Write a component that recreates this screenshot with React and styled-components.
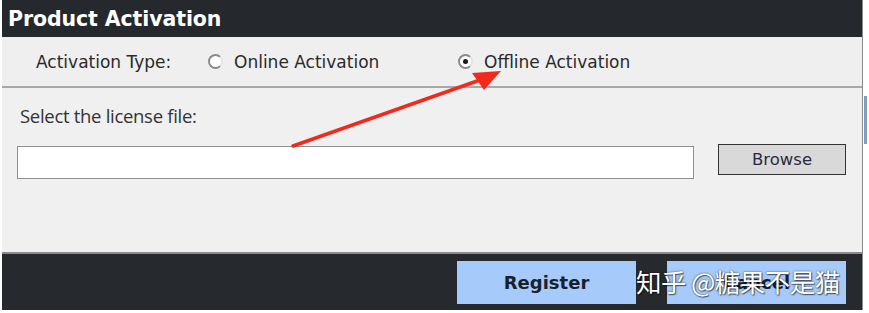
import React from 'react';
import styled, { createGlobalStyle } from 'styled-components';

const GlobalStyle = createGlobalStyle`
  html, body {
    margin: 0;
    padding: 0;
    background: #ffffff;
  }
  body {
    font-family: 'DejaVu Sans', Verdana, sans-serif;
  }
`;

// 창 전체를 감싸는 div 입니다.
const Window = styled.div`
  position: relative;
  width: 860px;
  margin-left: 2px;
  border-right: 1px solid #8c8c8c;
  background: #f0f0f0;
`;

const TitleBar = styled.div`
  height: 37px;
  display: flex;
  align-items: center;
  padding-left: 6px;
  background: #25282d;
  color: #ffffff;
  font-family: 'DejaVu Sans', sans-serif;
  font-weight: 700;
  font-size: 20.5px;
  letter-spacing: -0.1px;
`;

const TypeRow = styled.div`
  height: 49px;
  display: flex;
  align-items: center;
  padding-left: 34px;
  background: #efefef;
  border-bottom: 2px solid #a8a8a8;
  color: #2a2a2a;
  font-size: 17px;
`;

const TypeLabel = styled.span`
  width: 172px;
`;

const RadioOption = styled.label`
  display: flex;
  align-items: center;
  gap: 11px;
  width: ${({ $width }) => $width}px;
`;

const RadioDot = styled.span`
  width: 11px;
  height: 11px;
  border-radius: 50%;
  border: 2px solid #8a8a8a;
  border-right-color: #e4e4e4;
  background: #ffffff;
  display: inline-flex;
  align-items: center;
  justify-content: center;
  &::after {
    content: '';
    width: 5px;
    height: 5px;
    border-radius: 50%;
    background: ${({ $checked }) => ($checked ? '#1a1a1a' : 'transparent')};
  }
`;

const Content = styled.div`
  height: 164px;
  padding: 15px 15px 0 15px;
  box-sizing: border-box;
  background: #f0f0f0;
`;

const FileLabel = styled.div`
  font-family: 'Open Sans', sans-serif;
  font-size: 18.5px;
  letter-spacing: -0.3px;
  color: #333333;
  padding-left: 3px;
  line-height: 26px;
`;

const FileRow = styled.div`
  display: flex;
  align-items: flex-start;
  gap: 24px;
  margin-top: 17px;
`;

const FileInput = styled.div`
  width: 675px;
  height: 31px;
  background: #ffffff;
  border: 1px solid #8f8f8f;
`;

const BrowseButton = styled.button`
  width: 128px;
  height: 31px;
  margin-top: -2px;
  background: #d9d9d9;
  border: 1px solid #333333;
  color: #2a2a40;
  font-family: 'DejaVu Sans', sans-serif;
  font-size: 16.5px;
  padding: 0;
`;

const Footer = styled.div`
  height: 49px;
  border-top: 2px solid #8a8a8a;
  background: #26292e;
  display: flex;
  justify-content: flex-end;
  align-items: flex-start;
  gap: 31px;
  padding: 7px 16px 0 0;
`;

const FooterButton = styled.button`
  width: 179px;
  height: 43px;
  background: #a6cbfa;
  border: none;
  color: #1a1f2e;
  font-family: 'DejaVu Sans', sans-serif;
  font-weight: 700;
  font-size: 18px;
  padding: 0;
`;

// 스크린샷 위에 겹쳐진 워터마크입니다.
const Watermark = styled.div`
  position: absolute;
  left: 634px;
  top: 262px;
  color: #ffffff;
  font-family: 'Noto Sans CJK SC', sans-serif;
  font-size: 25.5px;
  letter-spacing: -0.5px;
  text-shadow: 0 0 2px rgba(0, 0, 0, 0.7), 1px 1px 1px rgba(0, 0, 0, 0.5);
  white-space: nowrap;
`;

const ArrowLayer = styled.svg`
  position: absolute;
  left: 0;
  top: 0;
  pointer-events: none;
`;

const SideTab = styled.div`
  position: absolute;
  left: 862px;
  top: 96px;
  width: 3px;
  height: 48px;
  background: #7f9fc2;
`;

export default function App() {
  return (
    <>
      <GlobalStyle />
      <Window>
        <TitleBar>Product Activation</TitleBar>
        <TypeRow>
          <TypeLabel>Activation Type:</TypeLabel>
          <RadioOption $width={250}>
            <RadioDot />
            Online Activation
          </RadioOption>
          <RadioOption $width={200}>
            <RadioDot $checked />
            Offline Activation
          </RadioOption>
        </TypeRow>
        <Content>
          <FileLabel>Select the license file:</FileLabel>
          <FileRow>
            <FileInput />
            <BrowseButton>Browse</BrowseButton>
          </FileRow>
        </Content>
        <Footer>
          <FooterButton>Register</FooterButton>
          <FooterButton>Cancel</FooterButton>
        </Footer>
        <SideTab />
        <ArrowLayer width="860" height="313" viewBox="0 0 860 313">
          <line x1="291" y1="146" x2="478" y2="80" stroke="#f02a1c" strokeWidth="3.5" strokeLinecap="round" />
          <polygon points="499,71 470,73 482,90" fill="#f02a1c" />
        </ArrowLayer>
        <Watermark>知乎 @糖果不是猫</Watermark>
      </Window>
    </>
  );
}
